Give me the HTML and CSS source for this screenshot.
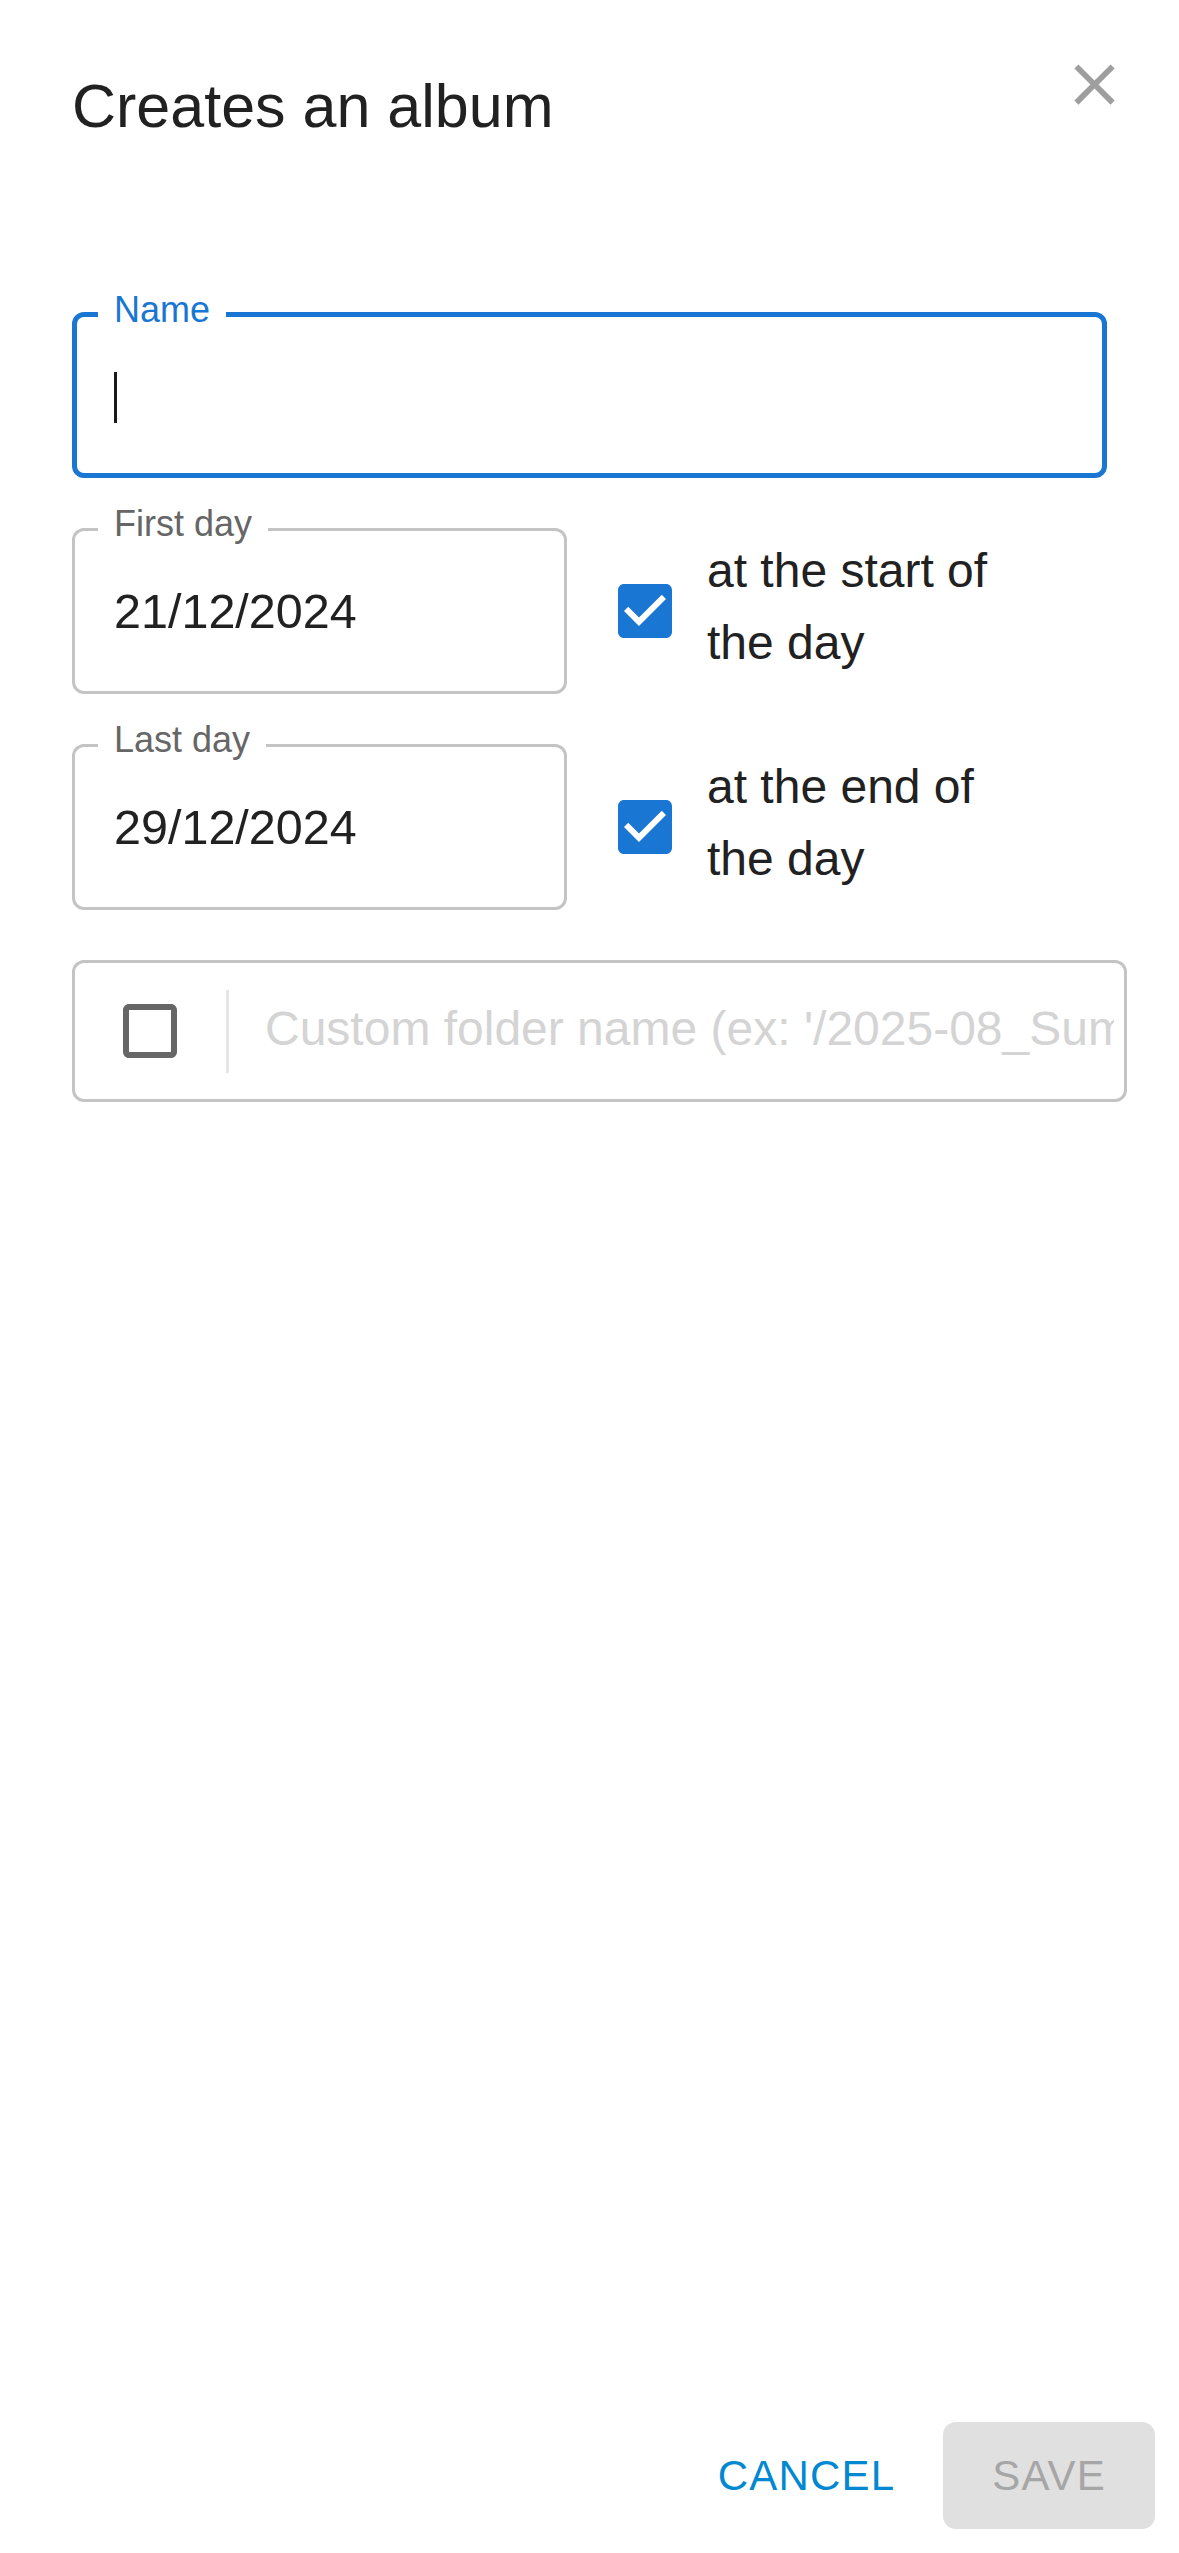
FILE: index.html
```html
<!DOCTYPE html>
<html lang="en">
<head>
<meta charset="utf-8">
<title>Creates an album</title>
<link rel="stylesheet" href="styles.css">
</head>
<body>
<div class="dialog">
  <header class="title-row">
    <h1 class="title">Creates an album</h1>
    <button class="close" aria-label="close">
      <svg viewBox="0 0 24 24" class="close-icon"><path d="M19 6.41 17.59 5 12 10.59 6.41 5 5 6.41 10.59 12 5 17.59 6.41 19 12 13.41 17.59 19 19 17.59 13.41 12z"/></svg>
    </button>
  </header>

  <main class="content">
    <div class="field focused">
      <span class="label">Name</span>
      <div class="input"><span class="caret"></span></div>
    </div>

    <div class="row">
      <div class="field date">
        <span class="label">First day</span>
        <div class="input">21/12/2024</div>
      </div>
      <label class="check">
        <svg viewBox="0 0 24 24" class="cb checked"><path d="M19 3H5c-1.11 0-2 .9-2 2v14c0 1.1.89 2 2 2h14c1.11 0 2-.9 2-2V5c0-1.1-.89-2-2-2zm-9 14l-5-5 1.41-1.41L10 14.17l7.59-7.59L19 8l-9 9z"/></svg>
        <span class="check-text">at the start of the day</span>
      </label>
    </div>

    <div class="row">
      <div class="field date">
        <span class="label">Last day</span>
        <div class="input">29/12/2024</div>
      </div>
      <label class="check">
        <svg viewBox="0 0 24 24" class="cb checked"><path d="M19 3H5c-1.11 0-2 .9-2 2v14c0 1.1.89 2 2 2h14c1.11 0 2-.9 2-2V5c0-1.1-.89-2-2-2zm-9 14l-5-5 1.41-1.41L10 14.17l7.59-7.59L19 8l-9 9z"/></svg>
        <span class="check-text">at the end of the day</span>
      </label>
    </div>

    <div class="folder">
      <svg viewBox="0 0 24 24" class="cb unchecked"><path d="M19 5v14H5V5h14m0-2H5c-1.1 0-2 .9-2 2v14c0 1.1.9 2 2 2h14c1.1 0 2-.9 2-2V5c0-1.1-.9-2-2-2z"/></svg>
      <span class="divider"></span>
      <div class="placeholder">Custom folder name (ex: '/2025-08_Summer')</div>
    </div>
  </main>

  <footer class="actions">
    <button class="btn cancel">Cancel</button>
    <button class="btn save">Save</button>
  </footer>
</div>
</body>
</html>
```

FILE: styles.css
```css
* { box-sizing: border-box; }

html, body {
  margin: 0;
  padding: 0;
  background: #ffffff;
}

body {
  font-family: "Liberation Sans", Arial, Helvetica, sans-serif;
  color: #212121;
}

.dialog {
  position: relative;
  min-height: 2553px;
  display: flex;
  flex-direction: column;
}

.title-row {
  padding: 58px 72px 0;
}

.title {
  margin: 0;
  font-size: 61px;
  font-weight: 400;
  line-height: 96px;
  color: #212121;
}

.close {
  position: absolute;
  top: 50px;
  right: 50px;
  width: 69px;
  height: 69px;
  padding: 0;
  border: 0;
  background: transparent;
}

.close-icon {
  display: block;
  width: 69px;
  height: 69px;
  fill: #9e9e9e;
}

.content {
  padding: 158px 72px 0;
  display: flex;
  flex-direction: column;
  gap: 50px;
}

.field {
  position: relative;
  border: 3px solid #c4c4c4;
  border-radius: 12px;
  padding: 46px 39px 45px;
}

.field.focused {
  border: 5px solid #1976d2;
  padding: 44px 37px 43px;
}

.label {
  position: absolute;
  top: -29px;
  left: 23px;
  padding: 0 16px 0 16px;
  background: #ffffff;
  font-size: 36px;
  line-height: 44px;
  color: #666666;
  white-space: nowrap;
}

.focused .label {
  left: 21px;
  color: #1976d2;
}

.input {
  height: 69px;
  font-size: 48.5px;
  line-height: 69px;
  color: #212121;
  white-space: nowrap;
}

.focused .input {
  padding-top: 11px;
}

.caret {
  display: block;
  width: 3px;
  height: 51px;
  background: #1a1a1a;
}

.row {
  display: flex;
  align-items: center;
}

.date {
  width: 495px;
  flex: none;
}

.check {
  display: flex;
  align-items: center;
  margin-left: 42px;
}

.cb {
  display: block;
  width: 72px;
  height: 72px;
  flex: none;
}

.cb.checked { fill: #1976d2; }
.cb.unchecked { fill: #666666; }

.check-text {
  margin-left: 26px;
  margin-bottom: 8px;
  width: 330px;
  font-size: 48px;
  line-height: 72px;
  color: #212121;
}

.folder {
  display: flex;
  align-items: center;
  margin-right: -20px;
  height: 142px;
  border: 3px solid #c4c4c4;
  border-radius: 12px;
  padding: 0 10px 0 39px;
}

.divider {
  flex: none;
  width: 3px;
  height: 83px;
  margin-left: 40px;
  background: #e6e6e6;
}

.placeholder {
  flex: 1;
  min-width: 0;
  margin-left: 36px;
  margin-bottom: 6px;
  overflow: hidden;
  white-space: nowrap;
  font-size: 48px;
  line-height: 69px;
  color: #d4d4d4;
}

.actions {
  margin-top: auto;
  display: flex;
  justify-content: flex-end;
  align-items: center;
  padding: 0 24px 24px;
}

.btn {
  font-family: "Liberation Sans", Arial, Helvetica, sans-serif;
  font-size: 42px;
  font-weight: 400;
  letter-spacing: 1.2px;
  text-transform: uppercase;
  border: 0;
  background: transparent;
  height: 107px;
  border-radius: 13px;
}

.cancel {
  padding: 0 24px;
  margin-right: 24px;
  color: #0288d1;
}

.save {
  padding: 0 49px;
  background: #e0e0e0;
  color: #a6a6a6;
}
```
